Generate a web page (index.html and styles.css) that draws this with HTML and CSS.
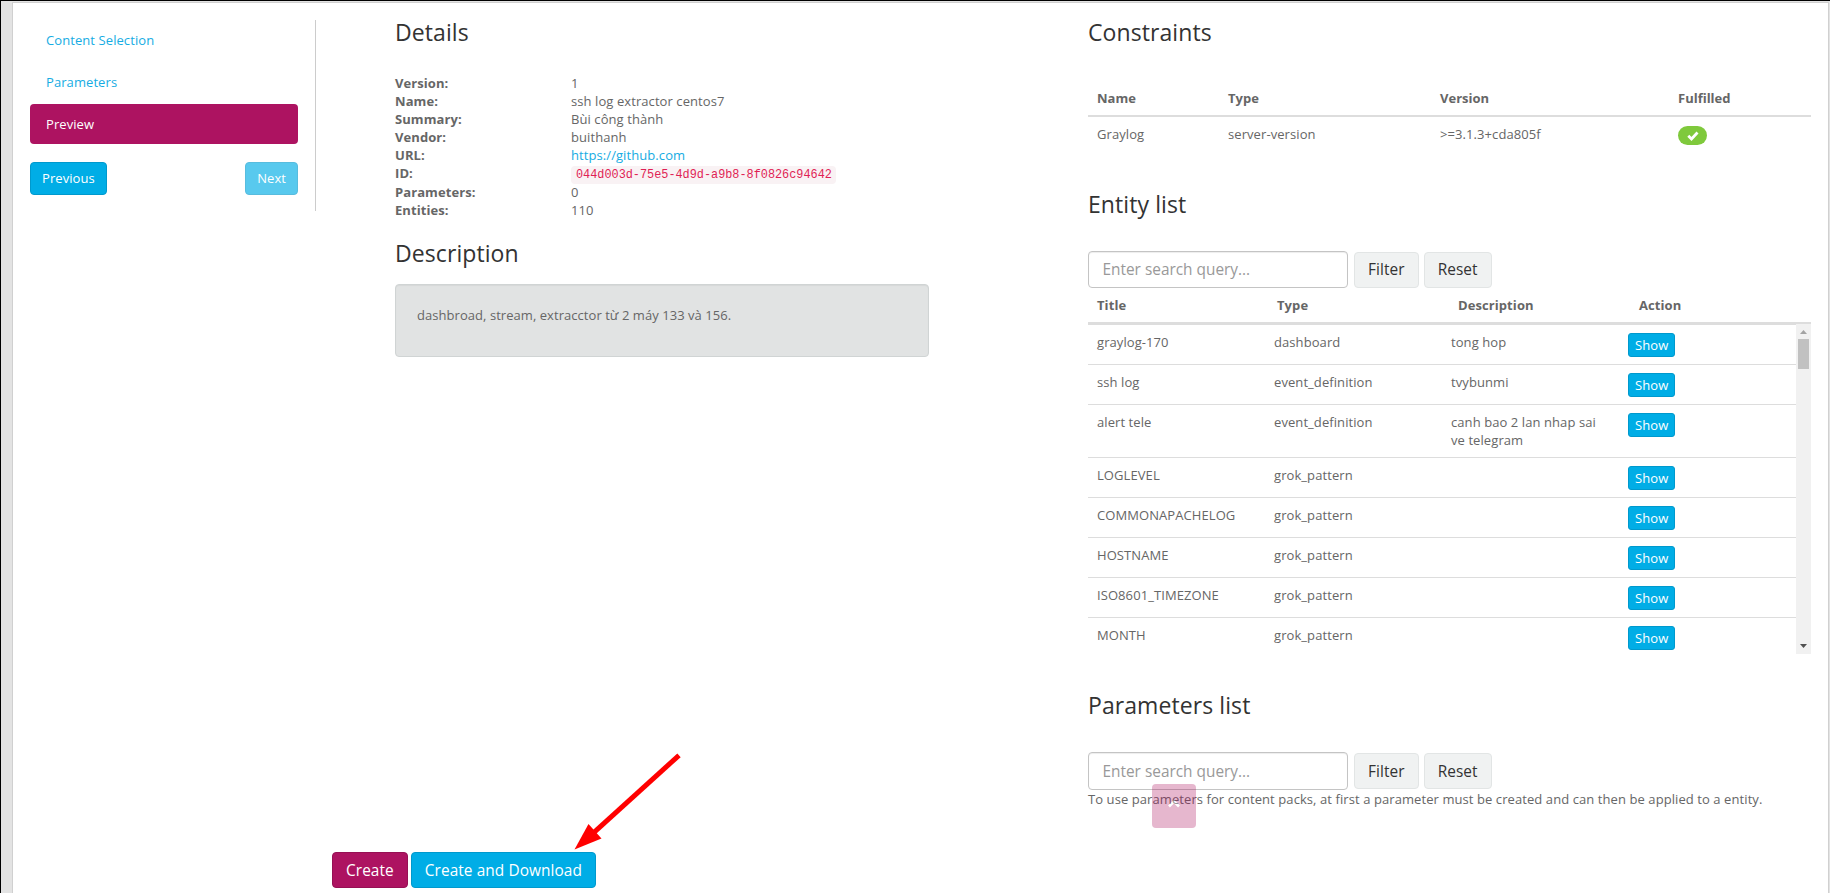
FILE: index.html
```html
<!DOCTYPE html>
<html lang="en">
<head>
<meta charset="utf-8">
<title>Create content pack</title>
<link rel="stylesheet" href="styles.css">
</head>
<body>
<main class="panel">
  <aside class="sidebar">
    <nav class="steps">
      <a class="step">Content Selection</a>
      <a class="step">Parameters</a>
      <a class="step step-active">Preview</a>
    </nav>
    <div class="pager">
      <button class="btn btn-info">Previous</button>
      <button class="btn btn-info btn-disabled">Next</button>
    </div>
  </aside>

  <div class="middle">
    <section class="details">
      <h2>Details</h2>
      <dl class="facts">
        <dt>Version:</dt><dd>1</dd>
        <dt>Name:</dt><dd>ssh log extractor centos7</dd>
        <dt>Summary:</dt><dd>Bùi công thành</dd>
        <dt>Vendor:</dt><dd>buithanh</dd>
        <dt>URL:</dt><dd><a class="link">https://github.com</a></dd>
        <dt>ID:</dt><dd><code>044d003d-75e5-4d9d-a9b8-8f0826c94642</code></dd>
        <dt>Parameters:</dt><dd>0</dd>
        <dt>Entities:</dt><dd>110</dd>
      </dl>
      <h2 class="sub">Description</h2>
      <div class="well">dashbroad, stream, extracctor từ 2 máy 133 và 156.</div>
    </section>
    <div class="actions">
      <button class="btn btn-lg btn-primary">Create</button>
      <button class="btn btn-lg btn-info">Create and Download</button>
    </div>
  </div>

  <div class="right">
    <h2>Constraints</h2>
    <div class="constraints">
      <div class="crow chead"><span>Name</span><span>Type</span><span>Version</span><span>Fulfilled</span></div>
      <div class="crow"><span>Graylog</span><span>server-version</span><span>&gt;=3.1.3+cda805f</span><span><i class="badge"><svg width="12" height="10" viewBox="0 0 12 10"><path d="M1.300 4.800 4.500 8 10.500 1.500" fill="none" stroke="#fff" stroke-width="2.800"/></svg></i></span></div>
    </div>

    <h2 class="entity-title">Entity list</h2>
    <div class="search">
      <input class="field" placeholder="Enter search query...">
      <button class="btn btn-lg btn-default">Filter</button>
      <button class="btn btn-lg btn-default">Reset</button>
    </div>
    <div class="ehead"><span>Title</span><span>Type</span><span>Description</span><span>Action</span></div>
    <div class="ebody">
      <div class="erows">
        <div class="erow"><span>graylog-170</span><span>dashboard</span><span>tong hop</span><span><button class="btn btn-sm btn-info">Show</button></span></div>
        <div class="erow"><span>ssh log</span><span>event_definition</span><span>tvybunmi</span><span><button class="btn btn-sm btn-info">Show</button></span></div>
        <div class="erow erow-tall"><span>alert tele</span><span>event_definition</span><span>canh bao 2 lan nhap sai ve telegram</span><span><button class="btn btn-sm btn-info">Show</button></span></div>
        <div class="erow"><span>LOGLEVEL</span><span>grok_pattern</span><span></span><span><button class="btn btn-sm btn-info">Show</button></span></div>
        <div class="erow"><span>COMMONAPACHELOG</span><span>grok_pattern</span><span></span><span><button class="btn btn-sm btn-info">Show</button></span></div>
        <div class="erow"><span>HOSTNAME</span><span>grok_pattern</span><span></span><span><button class="btn btn-sm btn-info">Show</button></span></div>
        <div class="erow"><span>ISO8601_TIMEZONE</span><span>grok_pattern</span><span></span><span><button class="btn btn-sm btn-info">Show</button></span></div>
        <div class="erow"><span>MONTH</span><span>grok_pattern</span><span></span><span><button class="btn btn-sm btn-info">Show</button></span></div>
      </div>
      <div class="scrollbar">
        <svg class="arrow" width="15" height="15" viewBox="0 0 15 15"><path d="M4 10h7L7.500 6z" fill="#a3a3a3"/></svg>
        <div class="thumb"></div>
        <svg class="arrow arrow-down" width="15" height="15" viewBox="0 0 15 15"><path d="M4 5h7L7.500 9z" fill="#505050"/></svg>
      </div>
    </div>

    <h2 class="params-title">Parameters list</h2>
    <div class="search search-params">
      <input class="field" placeholder="Enter search query...">
      <button class="btn btn-lg btn-default">Filter</button>
      <button class="btn btn-lg btn-default">Reset</button>
    </div>
    <p class="note">To use parameters for content packs, at first a parameter must be created and can then be applied to a entity.</p>
  </div>
</main>
<div class="to-top"><svg width="14" height="9" viewBox="0 0 14 9"><path d="M2 7.500 7 2.500 12 7.500" fill="none" stroke="#fff" stroke-width="2.600"/></svg></div>
<svg class="pointer" width="120" height="110" viewBox="0 0 120 110"><path d="M109 5.300 24 82.300" stroke="#f00" stroke-width="5"/><path d="M4.500 99.500 18.500 74 31.500 88.500z" fill="#f00"/></svg>
</body>
</html>
```
FILE: styles.css
```css
* { box-sizing: border-box; }
body {
  margin: 0;
  width: 1830px;
  height: 893px;
  overflow: hidden;
  padding: 1px 1px 0 11px;
  border-left: 1px solid #000;
  border-top: 1px solid #000;
  background: #e3e3e3;
  color: #666;
  font: 13px/18px "Open Sans", "Noto Sans", sans-serif;
  letter-spacing: .08px;
}
.panel {
  display: flex;
  height: 891px;
  border: 1px solid #d0d0d0;
  border-bottom: 0;
  background: #fff;
}
h2 {
  margin: 0;
  color: #333;
  font-weight: 400;
  font-size: 23px;
  line-height: 26px;
}
.sidebar {
  width: 303px;
  height: 191px;
  margin-top: 17px;
  padding: 0 17px;
  border-right: 1px solid #ccc;
}
.steps { display: flex; flex-direction: column; gap: 2px; }
.step {
  height: 40px;
  padding: 11px 16px;
  border-radius: 4px;
  color: #16ace3;
}
.step-active { background: #ad1361; color: #fff; }
.pager { display: flex; justify-content: space-between; margin-top: 18px; }
.btn {
  height: 33px;
  padding: 0 11px 1px;
  border: 1px solid transparent;
  border-radius: 4px;
  font: 13px/18px "Open Sans", "Noto Sans", sans-serif;
  letter-spacing: .08px;
  white-space: nowrap;
}
.btn-info { background: #00ade6; border-color: #0099cd; color: #fff; }
.btn-primary { background: #ad1361; border-color: #961054; color: #fff; }
.btn-default { background: #f0f2f2; border-color: #e2e5e5; color: #333; }
.btn-disabled { opacity: .65; }
.btn-lg { height: 36px; padding: 0 13px; font-size: 15.4px; }
.btn-sm { display: block; height: 24px; padding: 0 6px; border-radius: 3px; }

.middle { display: flex; flex-direction: column; width: 772px; padding: 16px 0 5px 16px; }
.details { width: 534px; margin-left: 63px; }
.facts {
  display: grid;
  grid-template-columns: 176px 1fr;
  grid-auto-rows: 18px;
  grid-template-rows: repeat(5, 18px) 19px;
  margin: 29px 0 0;
}
dt { font-weight: 700; }
dd { margin: 0; }
.link { color: #16ace3; }
code {
  padding: 2px 4px 2px 5px;
  border-radius: 4px;
  background: #f9f2f4;
  color: #e01f54;
  font: 11.85px/18px "Liberation Mono", monospace;
  letter-spacing: 0;
}
.sub { margin-top: 21px; }
.well {
  height: 73px;
  margin-top: 18px;
  padding: 21px;
  border: 1px solid #d0d4d4;
  border-radius: 4px;
  background: #e1e3e3;
  box-shadow: inset 0 1px 1px rgba(0, 0, 0, .05);
  letter-spacing: .05px;
}
.actions { display: flex; gap: 3px; margin-top: auto; }
.actions .btn-lg, .search-params .btn-lg { padding-top: 1px; }

.right { width: 723px; padding-top: 16px; }
.constraints { margin-top: 44px; }
.crow {
  display: grid;
  grid-template-columns: 131px 212px 238px 1fr;
  padding: 8px 9px 0;
}
.chead { height: 28px; padding-top: 0; border-bottom: 2px solid #ddd; font-weight: 700; letter-spacing: 0; }
.badge {
  display: flex;
  align-items: center;
  justify-content: center;
  width: 29px;
  height: 19px;
  margin-top: 1px;
  border-radius: 10px;
  background: #7fc93c;
}
.entity-title { margin-top: 46px; }
.search { display: flex; align-items: flex-end; height: 37px; margin-top: 34px; }
.field {
  width: 260px;
  height: 37px;
  margin-right: 6px;
  padding: 0 14px 1px 13.500px;
  border: 1px solid #c4c4c4;
  border-radius: 4px;
  background: #fff;
  box-shadow: inset 0 1px 1px rgba(0, 0, 0, .075);
  color: #333;
  font: 15.4px/20px "Open Sans", "Noto Sans", sans-serif;
}
.search-params .field { height: 38px; margin-bottom: -1px; padding-bottom: 0; }
.field::placeholder { color: #999; opacity: 1; }
.search .btn + .btn { margin-left: 5px; }
.ehead {
  display: grid;
  grid-template-columns: 180px 181px 181px 1fr;
  height: 36px;
  padding: 8px 0 0 9px;
  border-bottom: 2px solid #ddd;
  font-weight: 700;
}
.ebody { display: flex; height: 330px; overflow: hidden; }
.erows { width: 708px; }
.erow {
  display: grid;
  grid-template-columns: repeat(4, 177px);
  height: 40px;
  padding: 8px 0 0;
  border-top: 1px solid #ddd;
}
.erow > span { padding: 0 20px 0 9px; }
.erow-tall { height: 53px; }
.scrollbar { display: flex; flex-direction: column; width: 15px; background: #f1f1f1; }
.thumb { width: 11px; height: 30px; margin-left: 2px; background: #c1c1c1; }
.arrow { display: block; }
.arrow-down { margin-top: auto; }
.params-title { margin-top: 38px; }
.note { margin: 1px 0 0; white-space: nowrap; }
.to-top {
  position: absolute;
  left: 1152px;
  top: 784px;
  display: flex;
  justify-content: center;
  width: 44px;
  height: 44px;
  padding-top: 15px;
  border-radius: 4px;
  background: #ad1361;
  opacity: .3;
}
.pointer { position: absolute; left: 570px; top: 750px; }
```
